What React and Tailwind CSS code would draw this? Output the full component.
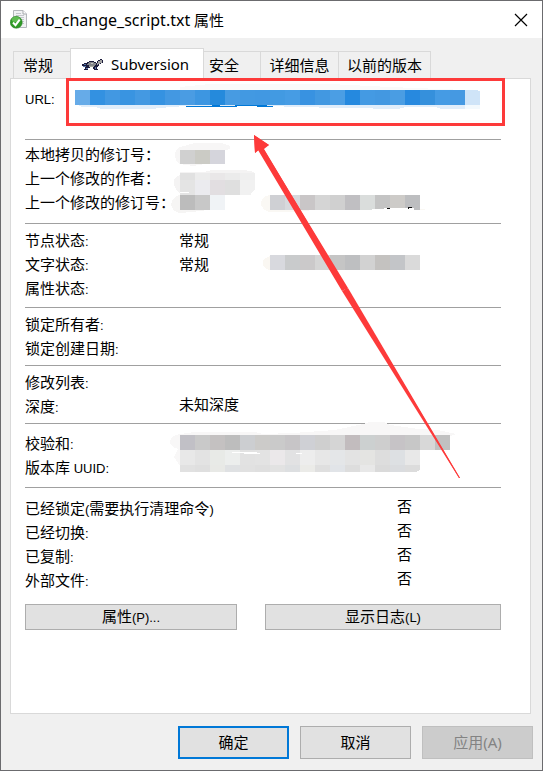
function FileIcon() {
  return (
    <svg width="18" height="19" viewBox="0 0 18 19" aria-hidden="true">
      <path d="M3.500 .5H13l3.500 3.500v13.500h-13z" fill="#f1f2f4" stroke="#b4b7bb" />
      <path d="M13 .5V4h3.500" fill="#fff" stroke="#a5a8ac" />
      <path d="M6 3.500h5M6 5.500h8M6 7.500h8M6 9.500h8M9 11.500h5M11 13.500h3" stroke="#c3c6cb" />
      <circle cx="6.200" cy="12.300" r="6" fill="#2f9a26" stroke="#237a1d" strokeWidth=".5" />
      <ellipse cx="6" cy="9.500" rx="4.300" ry="2.800" fill="#6cc45c" opacity=".8" />
      <path d="M3 12.500l2.500 2.700 4.200-5.500" fill="none" stroke="#fff" strokeWidth="2" />
    </svg>
  );
}

function TortoiseIcon() {
  return (
    <svg width="21" height="13" viewBox="0 0 21 13" shapeRendering="crispEdges" aria-hidden="true">
      <path d="M0 6h2V5h3V4h2V3h5v1h2v1h1V3h1V2h2V1h2v1h1v3h-2v1h-2v2h-1v1h-1v2h1v1h-4v-1h-1V9H8v1H6v2H2v-1h1V9h1V8H0z" fill="#1c1c3c" />
      <path d="M7 4h5v1h2v2h-1v1H7V7H5V6h1V5h1z" fill="#85888a" />
      <path d="M7 8h5v1H7z" fill="#a9aaa0" />
      <path d="M15 5h1V3h2V2h2v3h-2v1h-2v1h-1z" fill="#a2a2a2" />
      <path d="M2 6h2v1H2zM1 8h3v1H1zM4 10h2v1H4zM13 9h1v2h-1z" fill="#5877a8" />
      <path d="M9 5h2v1H9z" fill="#c5c5c5" />
    </svg>
  );
}

const urlColors = ['#66abe8', '#3391e1', '#4298e2', '#3994e1', '#4499e2', '#3592e1', '#4398e2', '#4a9ce3', '#3d96e1', '#258adc', '#479be2', '#4299e2', '#4198e2', '#429ae2', '#469ce4', '#3892e1', '#4298e1', '#4b9ee4', '#2589df', '#449ae3', '#4398e1', '#4a9de3', '#2789df', '#3590dc', '#459be4', '#4599e2'];

function Blocks({ x, y, h = 15, colors }) {
  return colors.map((c, i) => <rect key={i} x={x + i * 15} y={y} width="15" height={h} fill={c} />);
}

function Annotations() {
  return (
    <svg className="pointer-events-none absolute -left-px -top-px" width="530" height="500" viewBox="0 0 530 500" shapeRendering="crispEdges" aria-hidden="true">
      <path d="M180 90v-3l30-3h120l60 3 75 3z" fill="#fafafa" />
      <path d="M78 105h387v4h-24l-5-2h-30l-8 2h-22l-6-1h-36l-30-1h-20v-1H186l-15 1-20 2h-50l-5-2H82z" fill="#e0edfa" />
      <path d="M465 105h15v4h-15z" fill="#f3f9fd" />
      <Blocks x={75} y={90} colors={urlColors} />
      <path d="M186 106h26v-1h8v1h15v-1h32v1h6v1h-16v-1h-20v1h-51z" fill="#0078d7" />
      <path d="M465 90h13v1h2v14h-15z" fill="#cfe4f8" />

      <path d="M175 155q0-6 5-8l15-4h27l8 3v3l-5 1v13l-20 1-12 2-13-2q-5-3-5-9" fill="#f7f6f6" />
      <Blocks x={180} y={150} h={14} colors={['#d0d0d0', '#cbcbc5', '#d5d5dc']} />
      <path d="M174 182q0-5 6-7v-3h24l8-2h32l10 2v17l-4 6h-67q-9-4-9-13" fill="#f4f3f3" />
      <Blocks x={180} y={173} h={7} colors={['#e1e1e1', '#ececec', '#e9e7e8', '#ebebeb', '#efefef']} />
      <Blocks x={180} y={180} colors={['#e4e4e4', '#ebebef', '#e2dee1', '#dfdfdf', '#f1f1f1']} />
      <path d="M180 192h9v1h-9zM255 180v15h-4v-2l4-4z" fill="#fff" />
      <path d="M171 204q2-8 9-9h45v15h-17l-16 2-12 1q-8-1-9-9" fill="#f6f5f4" />
      <Blocks x={180} y={195} colors={['#bcbcbc', '#c8c8c8', '#f0f3f6']} />

      <path d="M270 195c-12 1-12 15 0 17h20l25-2h110v-1z" fill="#faf8f4" />
      <Blocks x={270} y={195} colors={['#cfd0d4', '#d7d9dd', '#c9c6c7', '#d5d5d5', '#d0d0d0', '#c0bfc2', '#dadddc', '#c4c4c4', '#cdcbc8', '#bdbec0']} />
      <path d="M372 209h12v-1h30v2h-42z" fill="#fff" />
      <path d="M387 208h3v1h-3zM408 207h4v1h-3v1h-1z" fill="#111" />
      <path d="M270 256c-10 3-10 12 0 14z" fill="#faf7f2" />
      <Blocks x={270} y={255} colors={['#d8d9de', '#c9cbcc', '#cbc9ca', '#d5d5d5', '#c5c5c5', '#bebfc1', '#d2d2d2', '#c4c2c0', '#c3c5c8', '#dadada']} />

      <path d="M180 434l15-2h60l8 2 30-1 42-3 28-6 6-2h15l6 3 28 4 20 1 18 4-5 2H180v30l-6-9 4-8q-8-2-8-8 1-6 10-7" fill="#f8f7f7" />
      <Blocks x={180} y={435} colors={['#c1c0c6', '#c9c9c9', '#c4c1c1', '#bdbdbd', '#ccced1', '#cccbc9', '#cacaca', '#c7c5c7', '#cfd0d5', '#cfcfcf', '#d5d5d5', '#c2bcbe', '#ccd0d0', '#cecece', '#c6c3c6', '#c7c7c7', '#d8d8d8', '#c1c1c1']} />
      <Blocks x={180} y={450} colors={['#e8e8e8', '#e3e3e3', '#e8eae7', '#eceeed', '#e2e2e2', '#e3e3e3', '#ebe8ea', '#e2e2e3', '#ededed', '#e7e7e7', '#e4e6e8', '#e3e3e3', '#e4e4e2', '#dddddd', '#dde0e3', '#e8e8e8']} />
      <Blocks x={180} y={465} h={7} colors={['#e1e1e1', '#dfdfdf', '#e8e9e6', '#dfe1e3', '#e1e1e1', '#dfdfdf', '#e2e2e2', '#dddfe1', '#ebebe8', '#dfdfdf', '#e1e4e8', '#dddddd', '#e8e8e8', '#dadada', '#dadcdf', '#dcdcdc']} />
      <path d="M232 452h25v1h3v1h-16v-1h-12zM296 453h6v1h-6zM420 472v-2l-4 2z" fill="#fff" />

      <path d="M254 135l15 10-5 4 196 329h-1L260 149l-5 4z" fill="#fd3a3a" shapeRendering="geometricPrecision" />
      <path d="M254 135l15 10-6 3 85 140-6 3-84-141-3 3z" fill="#fd3a3a" shapeRendering="geometricPrecision" />
      <path d="M348 288l112 190h-1L342 291z" fill="#fd3a3a" shapeRendering="geometricPrecision" />
    </svg>
  );
}

function Latin({ children }) {
  return <span className="font-['Liberation_Sans',Arial,sans-serif] text-[13px]">{children}</span>;
}

function Row({ label, tail, value, raised, wide }) {
  return (
    <div className="flex h-6 items-center">
      <dt className={wide ? 'w-[372px]' : 'w-[154px]'}>
        {label}
        {tail && <Latin>{tail}</Latin>}
      </dt>
      <dd className={raised ? 'pb-1' : ''}>{value}</dd>
    </div>
  );
}

function Tab({ width, children }) {
  return (
    <button role="tab" aria-selected="false" className={`-ml-px h-[27px] border border-b-0 border-[#d9d9d9] bg-[#f0f0f0] pb-px leading-5 ${width}`}>
      {children}
    </button>
  );
}

export default function App() {
  return (
    <main className="relative flex min-h-screen w-full flex-col border border-[#6b6b6e] bg-[#f0f0f0] font-['Noto_Sans','Noto_Sans_CJK_SC',sans-serif] text-[15px] text-black">
      <header className="flex h-[37px] items-center bg-white pl-[9px] pr-[14px]">
        <FileIcon />
        <h1 className="ml-[7px] flex-1 leading-5"><span className="text-base leading-5">db_change_script.txt</span> 属性</h1>
        <button aria-label="关闭">
          <svg width="14" height="14" viewBox="0 0 14 14"><path d="M1 1l12 12M13 1L1 13" stroke="#000" strokeWidth="1.200" /></svg>
        </button>
      </header>

      <div role="tablist" className="flex h-10 items-end pl-[13px]">
        <Tab width="w-[58px] pr-2">常规</Tab>
        <button role="tab" aria-selected="true" className="relative -mb-px -ml-px flex h-[31px] w-[134px] items-center gap-2 border border-b-0 border-[#d9d9d9] bg-white pl-[11px]">
          <TortoiseIcon />
          <span>Subversion</span>
        </button>
        <Tab width="w-[58px] pr-4">安全</Tab>
        <Tab width="w-[79px]">详细信息</Tab>
        <Tab width="w-[93px]">以前的版本</Tab>
      </div>

      <section role="tabpanel" aria-label="Subversion" className="ml-[9px] mr-[11px] flex-1 border border-[#d9d9d9] bg-white pl-[14px] pr-[29px]">
        <div className="flex h-[60px]">
          <label htmlFor="url" className="w-[41px] pt-[9px] leading-5"><Latin>URL:</Latin></label>
          <div className="relative -mr-1 -mt-px h-12 flex-1 border-[3px] border-[#fd3a3a]">
            <input id="url" readOnly className="h-full w-full px-1 outline-none" />
          </div>
        </div>
        <dl className="border-t border-[#a0a0a0] pb-[9px] pt-[2px]">
          <Row label="本地拷贝的修订号：" />
          <Row label="上一个修改的作者：" />
          <Row label="上一个修改的修订号：" />
        </dl>
        <dl className="border-t border-[#a0a0a0] pb-[7px] pt-1">
          <Row label="节点状态" tail=":" value="常规" />
          <Row label="文字状态" tail=":" value="常规" />
          <Row label="属性状态" tail=":" />
        </dl>
        <dl className="border-t border-[#a0a0a0] pb-[5px] pt-1">
          <Row label="锁定所有者" tail=":" />
          <Row label="锁定创建日期" tail=":" />
        </dl>
        <dl className="border-t border-[#a0a0a0] pb-[5px] pt-1">
          <Row label="修改列表" tail=":" />
          <Row label="深度" tail=":" value="未知深度" raised />
        </dl>
        <dl className="border-t border-[#a0a0a0] pb-2 pt-[7px]">
          <Row label="校验和" tail=":" />
          <Row label="版本库" tail=" UUID:" />
        </dl>
        <dl className="border-t border-[#a0a0a0] pb-3 pt-2">
          <Row wide raised label={<>已经锁定<Latin>(</Latin>需要执行清理命令<Latin>)</Latin></>} value="否" />
          <Row wide raised label="已经切换" tail=":" value="否" />
          <Row wide raised label="已复制" tail=":" value="否" />
          <Row wide raised label="外部文件" tail=":" value="否" />
        </dl>
        <div className="flex gap-7">
          <button className="h-[26px] w-[212px] border border-[#adadad] bg-[#e1e1e1] leading-5">属性<Latin>(P)...</Latin></button>
          <button className="h-[26px] flex-1 border border-[#adadad] bg-[#e1e1e1] leading-5">显示日志<Latin>(L)</Latin></button>
        </div>
      </section>

      <footer className="flex justify-end gap-[11px] px-[9px] pb-[11px] pt-3">
        <button className="h-[33px] w-[111px] border-2 border-[#0078d7] bg-[#e1e1e1]">确定</button>
        <button className="h-[33px] w-[111px] border border-[#adadad] bg-[#e1e1e1]">取消</button>
        <button disabled className="h-[33px] w-[111px] border border-[#bfbfbf] bg-[#cccccc] text-[#838383]">应用(A)</button>
      </footer>
      <Annotations />
    </main>
  );
}
